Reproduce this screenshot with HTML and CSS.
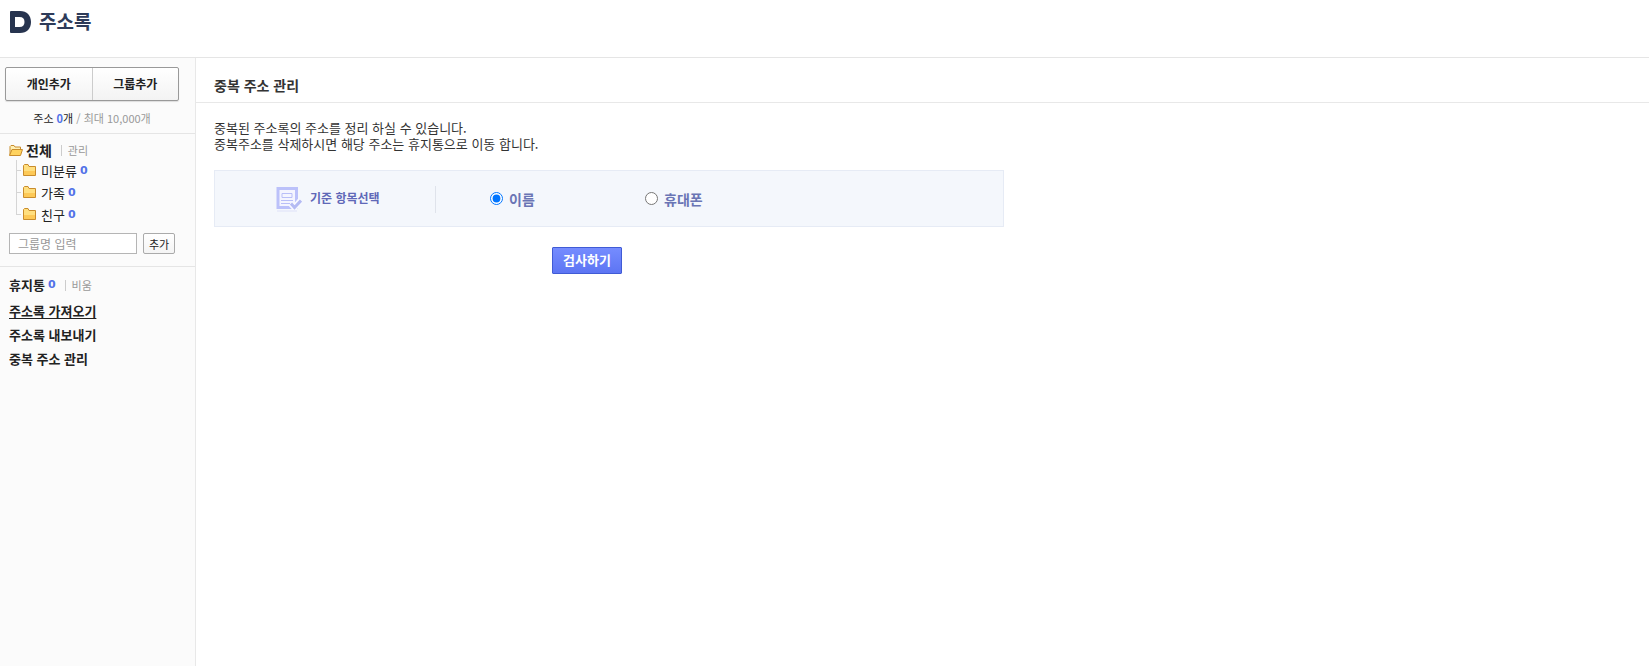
FILE: index.html
```html
<!DOCTYPE html>
<html lang="ko">
<head>
<meta charset="utf-8">
<title>주소록</title>
<link rel="stylesheet" href="styles.css">
</head>
<body>
<header class="header">
  <svg class="logo" viewBox="0 0 22 22" aria-hidden="true"><path fill="#27344f" fill-rule="evenodd" d="M2 0H11C18 0 22 4.500 22 11S18 22 11 22H2Q1 22 1 21V1Q1 0 2 0ZM6 6V16H10.500Q15.500 16 15.500 11T10.500 6Z"/></svg>
  <h1 class="brand">주소록</h1>
</header>
<div class="layout">
  <aside class="sidebar">
    <section class="add-area">
      <div class="add-group">
        <button type="button" class="add-button">개인추가</button>
        <button type="button" class="add-button">그룹추가</button>
      </div>
      <p class="usage">주소 <b class="usage-count">0</b>개 <span class="muted">/ 최대 10,000개</span></p>
    </section>
    <section class="groups">
      <div class="all-row">
        <svg class="open-folder" viewBox="0 0 14 11" aria-hidden="true"><path d="M1 10V1.500L2 .5H5L6 2H11.500V4" fill="#fff0b5" stroke="#c98c2c"/><path d="M3 4.500H13.500L11.500 10.500H.5Z" fill="#ffd35f" stroke="#c98c2c"/></svg>
        <a href="#" class="all-link">전체</a><a href="#" class="side-action">관리</a>
      </div>
      <ul class="tree">
        <li class="tree-item"><svg class="folder" viewBox="0 0 13 12" aria-hidden="true"><path d="M.5 11.500V1.500L1.500.5H5L6 2.500H12.500V11.500Z" fill="#ffdf7f"/><path d="M1 7H12V11H1Z" fill="#fdc957"/><path d="M.5 11.500V1.500L1.500.5H5L6 2.500H12.500V11.500Z" fill="none" stroke="#c98c2c"/></svg><a href="#">미분류</a><b class="count">0</b></li>
        <li class="tree-item"><svg class="folder" viewBox="0 0 13 12" aria-hidden="true"><path d="M.5 11.500V1.500L1.500.5H5L6 2.500H12.500V11.500Z" fill="#ffdf7f"/><path d="M1 7H12V11H1Z" fill="#fdc957"/><path d="M.5 11.500V1.500L1.500.5H5L6 2.500H12.500V11.500Z" fill="none" stroke="#c98c2c"/></svg><a href="#">가족</a><b class="count">0</b></li>
        <li class="tree-item"><svg class="folder" viewBox="0 0 13 12" aria-hidden="true"><path d="M.5 11.500V1.500L1.500.5H5L6 2.500H12.500V11.500Z" fill="#ffdf7f"/><path d="M1 7H12V11H1Z" fill="#fdc957"/><path d="M.5 11.500V1.500L1.500.5H5L6 2.500H12.500V11.500Z" fill="none" stroke="#c98c2c"/></svg><a href="#">친구</a><b class="count">0</b></li>
      </ul>
      <form class="group-form">
        <input class="group-input" type="text" aria-label="그룹명" placeholder="그룹명 입력">
        <button type="button" class="small-button">추가</button>
      </form>
    </section>
    <nav class="tools">
      <div class="trash-row"><a href="#">휴지통</a><b class="count">0</b><a href="#" class="side-action">비움</a></div>
      <a href="#" class="tool-link current">주소록 가져오기</a>
      <a href="#" class="tool-link">주소록 내보내기</a>
      <a href="#" class="tool-link">중복 주소 관리</a>
    </nav>
  </aside>
  <main class="content">
    <h2 class="title">중복 주소 관리</h2>
    <div class="body">
      <p class="description">중복된 주소록의 주소를 정리 하실 수 있습니다.<br>중복주소를 삭제하시면 해당 주소는 휴지통으로 이동 합니다.</p>
      <form>
        <div class="panel" role="radiogroup" aria-labelledby="criteria">
          <div class="criteria">
            <svg class="check-icon" viewBox="0 0 26 26" aria-hidden="true"><path d="M2 1.500H20.500V20.500H2Z" fill="#f4f5ff" stroke="#bbc1fa" stroke-width="3"/><path d="M6 6.500H16V10.500H6Z" fill="none" stroke="#b9bff8"/><path d="M5 13.500H17M5 16.500H14" stroke="#b9bff8"/><path d="M15 17L18.500 20.500L25 13" fill="none" stroke="#f8f9ff" stroke-width="6"/><path d="M15 16.500L18.500 20.500L25 13.500" fill="none" stroke="#b4bbf3" stroke-width="3"/><path d="M1 24H21" stroke="#e9ecfa" stroke-width="2"/></svg>
            <strong id="criteria" class="criteria-name">기준 항목선택</strong>
          </div>
          <label class="option"><input type="radio" name="field" class="radio" checked>이름</label>
          <label class="option"><input type="radio" name="field" class="radio">휴대폰</label>
        </div>
        <div class="actions"><button type="button" class="check-button">검사하기</button></div>
      </form>
    </div>
  </main>
</div>
</body>
</html>
```
FILE: styles.css
```css
* { box-sizing: border-box; }
body {
  margin: 0;
  min-height: 100vh;
  display: flex;
  flex-direction: column;
  background: #fff;
  color: #222;
  font: 13px/16px "Noto Sans CJK KR", sans-serif;
}
h1, h2, p, ul { margin: 0; padding: 0; }
button, input { font-family: inherit; margin: 0; }
a { color: inherit; text-decoration: none; }

.header {
  display: flex;
  align-items: flex-start;
  gap: 8px;
  height: 58px;
  padding: 11px 9px 0;
  border-bottom: 1px solid #e5e5e5;
}
.logo { width: 22px; height: 22px; }
.brand { font-size: 19px; line-height: 20px; font-weight: 700; color: #2e3b59; }

.layout { flex: 1; display: flex; }
.sidebar {
  flex: 0 0 196px;
  min-width: 0;
  background: #fbfbfb;
  border-right: 1px solid #e8e8e8;
}

.add-area { padding: 9px 16px 7px 5px; border-bottom: 1px solid #e5e5e5; }
.add-group {
  display: flex;
  height: 34px;
  border: 1px solid #999;
  border-radius: 2px;
  background: linear-gradient(#fff, #f3f3f3);
  box-shadow: 0 1px 1px #ddd;
}
.add-button {
  flex: 1;
  padding: 0 0 2px;
  border: 0;
  background: transparent;
  color: #222;
  font-size: 12px;
  font-weight: 700;
}
.add-button + .add-button { border-left: 1px solid #ccc; }
.usage { margin-top: 9px; font-size: 11px; text-align: center; }
.usage-count { color: #5272e8; }
.muted { color: #999; }

.groups { padding: 8px 16px 12px 9px; border-bottom: 1px solid #e5e5e5; }
.all-row, .trash-row { display: flex; align-items: center; }
.open-folder { width: 14px; height: 11px; margin-right: 3px; }
.all-link { font-size: 14px; font-weight: 700; }
.side-action {
  margin-left: 9px;
  padding-left: 6px;
  border-left: 1px solid #ccc;
  color: #999;
  font-size: 11px;
  font-weight: 400;
  line-height: 11px;
}
.count { margin-left: 3px; color: #5272e8; font: bold 11px/16px "DejaVu Sans", sans-serif; }

.tree { margin-top: 2px; padding-left: 7px; list-style: none; }
.tree-item {
  display: flex;
  align-items: center;
  height: 22px;
  background:
    linear-gradient(#d5d5d5, #d5d5d5) 0 0 / 1px 100% no-repeat,
    linear-gradient(#d5d5d5, #d5d5d5) 0 10px / 5px 1px no-repeat;
}
.tree-item:last-child {
  background-size: 1px 10px, 5px 1px;
}
.folder { width: 13px; height: 12px; margin: 0 5px 3px 7px; }

.group-form { display: flex; gap: 6px; margin-top: 7px; padding-right: 4px; }
.group-input {
  flex: 1;
  min-width: 0;
  height: 21px;
  padding: 0 8px;
  border: 1px solid #b5b5b5;
  background: #fff;
  font-size: 12px;
}
.group-input::placeholder { color: #999; opacity: 1; }
.small-button {
  width: 32px;
  height: 21px;
  padding: 0;
  border: 1px solid #aaa;
  border-radius: 2px;
  background: linear-gradient(#fff, #f4f4f4);
  color: #222;
  font-size: 11px;
  line-height: 16px;
}

.tools {
  display: flex;
  flex-direction: column;
  align-items: flex-start;
  gap: 8px;
  padding: 10px 9px;
  font-weight: 700;
}
.trash-row { margin-bottom: 2px; }
.current { text-decoration: underline; text-underline-offset: 2px; }

.content { flex: 1; min-width: 0; }
.title {
  padding: 19px 18px 9px;
  border-bottom: 1px solid #e8e8e8;
  font-size: 14px;
  line-height: 16px;
  color: #333;
}
.body { padding: 17px 18px; }
.description { color: #333; }
.panel {
  display: flex;
  align-items: center;
  max-width: 790px;
  height: 57px;
  margin-top: 18px;
  border: 1px solid #e6ebf5;
  background: #f4f7fc;
}
.criteria {
  display: flex;
  align-items: center;
  gap: 8px;
  width: 221px;
  height: 27px;
  margin-top: 2px;
  padding-left: 61px;
  border-right: 1px solid #dfe3eb;
  color: #5f68b8;
  font-size: 12px;
}
.criteria-name { padding-bottom: 4px; }
.check-icon { width: 26px; height: 26px; }
.option {
  display: flex;
  align-items: center;
  gap: 6px;
  width: 155px;
  color: #6a75b5;
  font-size: 14px;
  font-weight: 700;
}
.criteria + .option { margin-left: 54px; }
.radio { width: 13px; height: 13px; }
.actions { display: flex; justify-content: center; max-width: 746px; margin-top: 20px; }
.check-button {
  width: 70px;
  height: 27px;
  padding: 0 0 2px;
  border: 1px solid #405bd5;
  border-radius: 1px;
  background: linear-gradient(#758cff, #5d75f3);
  color: #fff;
  font-size: 13px;
  font-weight: 700;
  line-height: 20px;
}
```
